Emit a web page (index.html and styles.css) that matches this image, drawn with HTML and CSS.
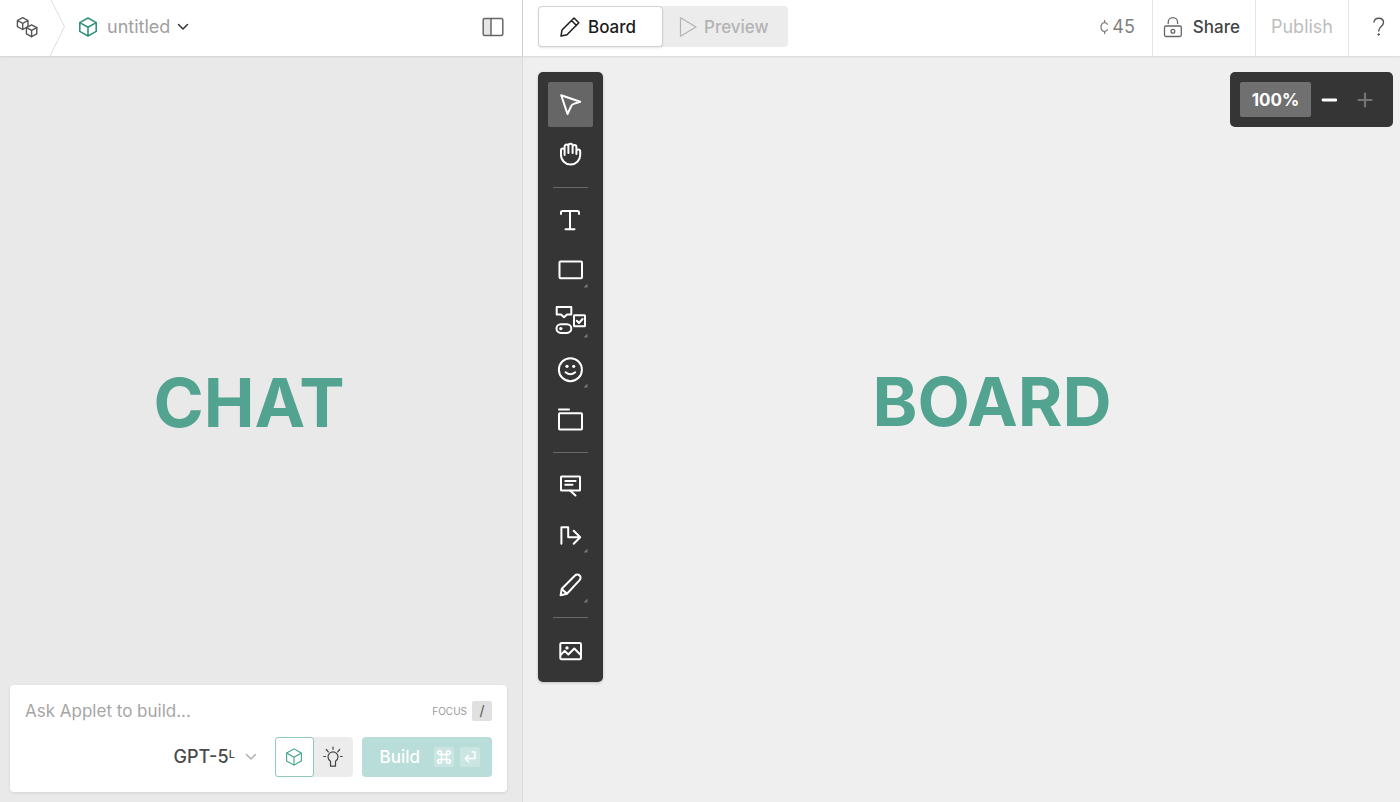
FILE: index.html
```html
<!DOCTYPE html>
<html lang="en">
<head>
<meta charset="utf-8">
<title>untitled</title>
<link rel="stylesheet" href="styles.css">
</head>
<body>
<svg class="defs" aria-hidden="true">
  <symbol id="cube" viewBox="0 0 20 20"><path d="M10 1l8.200 4.600v8.800L10 19l-8.200-4.600V5.600zM1.800 5.600L10 10.200l8.200-4.600M10 10.200V19"/></symbol>
  <symbol id="chevron" viewBox="0 0 12 12"><path d="M1.500 3.500l4.500 4.500 4.500-4.500"/></symbol>
</svg>
<div class="app">
  <section class="chat">
    <header class="bar">
      <button class="home" aria-label="All applets">
        <svg width="22" height="22" viewBox="0 0 22 22"><path d="M6.700 1.700l5.300 2.800v6.200L6.700 13.500l-5.300-2.800V4.500zM1.400 4.500l5.300 2.900L12 4.500M6.700 7.400v6.100"/><path class="front" d="M15.600 8.800l5.200 2.800v6.200l-5.200 2.900-5.200-2.900v-6.200z"/><path d="M10.400 11.600l5.200 2.800 5.200-2.800M15.600 14.400v6.300"/></svg>
      </button>
      <svg class="crumb" width="16" height="56" viewBox="0 0 16 56" aria-hidden="true"><path d="M1 0l13.500 26.500L0 56"/></svg>
      <button class="project">
        <svg class="cube-green" width="20" height="20"><use href="#cube"/></svg>
        <span>untitled</span>
        <svg class="caret" width="12" height="12"><use href="#chevron"/></svg>
      </button>
      <button class="panel-toggle" aria-label="Toggle sidebar">
        <svg width="22" height="20" viewBox="0 0 22 20"><path class="pane" d="M1.500 2H9v16H1.500z"/><rect x="1.200" y="1.600" width="19.600" height="16.800" rx="1.500"/><path d="M9 1.600v16.800"/></svg>
      </button>
    </header>
    <main class="chat-body"><h1>CHAT</h1></main>
    <form class="composer">
      <div class="prompt">
        <input type="text" aria-label="Prompt" placeholder="Ask Applet to build...">
        <span class="focus">FOCUS</span><kbd class="slash">/</kbd>
      </div>
      <div class="actions">
        <label class="model"><select aria-label="Model"><option>GPT-5ᴸ</option></select>
          <svg width="12" height="12"><use href="#chevron"/></svg></label>
        <div class="modes">
          <button type="button" class="mode active" aria-label="Build mode"><svg width="18" height="20"><use href="#cube"/></svg></button>
          <button type="button" class="mode" aria-label="Idea mode"><svg width="20" height="22" viewBox="0 0 20 22"><path d="M7.500 15.300C5.900 14 5 12.800 5 10.900a5 5 0 0 1 10 0c0 1.900-.9 3.100-2.500 4.400v4.900h-5zM10 1v2.300M3.300 3.500l2 2.300M16.700 3.500l-2 2.300M.8 10.500h1.800M17.400 10.500h1.800"/></svg></button>
        </div>
        <button type="button" class="build"><span>Build</span>
          <kbd><svg width="16" height="16" viewBox="0 0 16 16"><path d="M5.500 5.500h5v5h-5zM5.500 5.500H3.700a1.900 1.900 0 1 1 1.800-1.900zM10.500 5.500V3.600a1.900 1.900 0 1 1 1.800 1.900zM10.500 10.500h1.800a1.900 1.900 0 1 1-1.800 1.900zM5.500 10.500v1.900a1.900 1.900 0 1 1-1.800-1.900z"/></svg></kbd>
          <kbd><svg width="16" height="16" viewBox="0 0 16 16"><path d="M10 3h3v6.500H3.500M6.500 6.300L3.300 9.500l3.200 3.200"/></svg></kbd>
        </button>
      </div>
    </form>
  </section>

  <section class="board">
    <header class="bar">
      <div class="tabs">
        <button class="tab active"><svg width="22" height="22" viewBox="0 0 22 22"><path d="M2 20l1-6L15 2l4.800 4.800L8 18.800zM12.500 4.500l5 5"/></svg>Board</button>
        <button class="tab"><svg width="18" height="22" viewBox="0 0 18 22"><path d="M1.500 1.800v18.400L17 11z"/></svg>Preview</button>
      </div>
      <div class="credits"><svg width="8" height="16" viewBox="0 0 8 16"><path d="M7.300 5.200C6.600 4.200 5.700 3.700 4.600 3.700 2.500 3.700 1 5.400 1 8s1.500 4.300 3.600 4.300c1.100 0 2-.5 2.700-1.500M4.600 1.500v2.200M4.600 12.300v2.200"/></svg>45</div>
      <button class="share"><svg width="20" height="22" viewBox="0 0 20 22"><rect x="1.500" y="10" width="16.800" height="10.500" rx="1.500"/><circle cx="9.900" cy="15.300" r="1.900"/><path d="M5.200 7.500V6.400a4.700 4.700 0 0 1 9.400 0v1.100"/></svg>Share</button>
      <button class="publish">Publish</button>
      <button class="help" aria-label="Help"><svg width="12" height="20" viewBox="0 0 12 20"><path d="M1 5c.4-2.300 2.300-3.700 4.700-3.700 2.800 0 4.800 1.700 4.800 4.200 0 4-4.800 4-4.800 8.500"/><circle cx="5.700" cy="17.500" r=".8"/></svg></button>
    </header>
    <main class="canvas">
      <nav class="tools" aria-label="Tools">
        <button class="tool active" aria-label="Select"><svg viewBox="0 0 45 45"><path d="M13.200 13.200l19 6.500-6.500 2.200q-2 .6-2.700 2.600L19.500 32z"/></svg></button>
        <button class="tool" aria-label="Hand"><svg viewBox="0 0 45 45"><path d="M16.600 23v-4.800a1.800 1.800 0 0 0-3.600 0V23a9.600 9.600 0 0 0 19.200 0v-3.500a1.900 1.900 0 0 0-3.800 0V22M16.600 18.500v-4a1.900 1.900 0 0 1 3.800 0V21M20.400 15v-1.200a2.100 2.100 0 0 1 4.200 0V21M24.600 15a1.900 1.900 0 0 1 3.800 0v7"/></svg></button>
        <hr>
        <button class="tool" aria-label="Text"><svg viewBox="0 0 45 45"><path d="M13 17v-1.500q0-1.500 1.500-1.500h15q1.500 0 1.500 1.500V17M22 14v18.300M17.500 32.300h9"/></svg></button>
        <button class="tool" aria-label="Rectangle"><svg viewBox="0 0 45 45"><rect x="11.500" y="14.500" width="22.500" height="16.800" rx="1"/><path class="more" d="M39.500 36.500v4H35.500z"/></svg></button>
        <button class="tool" aria-label="Components"><svg viewBox="0 0 45 45"><path d="M8.700 10h14.600v7.500h-4.300L16 20.300l-3-2.800H8.700z"/><rect x="26" y="18.300" width="11" height="11" rx=".5"/><path d="M28.800 23.800l2.200 2.200 3.600-4"/><rect x="8.500" y="27.300" width="14.800" height="8.600" rx="4.300"/><circle class="dot" cx="12.800" cy="31.600" r="1.700"/><path class="more" d="M39.500 36.500v4H35.500z"/></svg></button>
        <button class="tool" aria-label="Emoji"><svg viewBox="0 0 45 45"><circle cx="22.400" cy="22.700" r="11.500"/><circle class="dot" cx="19" cy="19.300" r="1.600"/><circle class="dot" cx="25.700" cy="19.300" r="1.600"/><path d="M17.600 25.300q4.800 4 9.600 0"/><path class="more" d="M39.500 36.500v4H35.500z"/></svg></button>
        <button class="tool" aria-label="Frame"><svg viewBox="0 0 45 45"><path d="M11 12.500h10"/><rect x="11" y="16.300" width="23" height="16.300" rx=".8"/></svg></button>
        <hr>
        <button class="tool" aria-label="Comment"><svg viewBox="0 0 45 45"><rect x="13" y="14.500" width="19" height="14" rx=".5"/><path d="M22 28.500l5.500 5M17.300 18.900h10.300M17.300 22.800h7.200"/></svg></button>
        <button class="tool" aria-label="Connector"><svg viewBox="0 0 45 45"><path d="M13.400 31.700V15.200h6.800v10h12M25.700 18.700l6.500 6.500-6.500 6.500"/><path class="more" d="M39.500 36.500v4H35.500z"/></svg></button>
        <button class="tool" aria-label="Pencil"><svg viewBox="0 0 45 45"><path d="M12.600 33.300l1.200-6.600L27 13.500a3.200 3.200 0 0 1 4.600 4.600L19 31.700zM14 27.300l4.700 4.300"/><path class="more" d="M39.500 36.500v4H35.500z"/></svg></button>
        <hr>
        <button class="tool" aria-label="Image"><svg viewBox="0 0 45 45"><rect x="12.300" y="16" width="20.700" height="16.200" rx="1.200"/><circle class="dot" cx="19" cy="20.900" r="1.700"/><path d="M12.800 27.700l3.900-3.800 3.600 3.600 6-6 6.200 6.200"/></svg></button>
      </nav>
      <h1>BOARD</h1>
      <div class="zoom">
        <button class="level">100%</button>
        <button class="step" aria-label="Zoom out"><svg width="16" height="16" viewBox="0 0 16 16"><path d="M2 8h13"/></svg></button>
        <button class="step dim" aria-label="Zoom in"><svg width="16" height="16" viewBox="0 0 16 16"><path d="M1.500 8h13M8 1.500v13"/></svg></button>
      </div>
    </main>
  </section>
</div>
</body>
</html>
```
FILE: styles.css
```css
* { box-sizing: border-box; }
body { margin: 0; font: 18px/24px Inter, "Noto Sans", sans-serif; color: #444; }
button, input, select { font: inherit; color: inherit; border: 0; background: none; padding: 0; margin: 0; }
button { display: flex; align-items: center; cursor: pointer; }
kbd { font: inherit; }
svg { flex: none; fill: none; stroke: currentColor; stroke-width: 1.5; stroke-linecap: round; stroke-linejoin: round; }
.defs { display: none; }
h1 { margin: 0; font: 700 68px/80px Inter, sans-serif; color: #52a390; }

.app { display: flex; min-height: 100vh; }
.chat { flex: 0 0 523px; display: flex; flex-direction: column; background: #e9e9e9; border-right: 1px solid #dcdcdc; }
.board { flex: 1; min-width: 0; display: flex; flex-direction: column; background: #efefef; }
.bar { height: 56px; display: flex; align-items: center; background: #fff; box-shadow: 0 1px 2px rgba(0, 0, 0, .1); padding-bottom: 3px; }

.home { padding-left: 16px; width: 50px; color: #555; }
.home svg { stroke-width: 1.4; }
.front { fill: #fff; }
.crumb { color: #ddd; align-self: flex-start; stroke-width: 1; }
.project { gap: 9px; margin-left: 12px; color: #a0a0a0; }
.cube-green { color: #35917c; stroke-width: 1.6; }
.caret { color: #333; margin-left: -2px; }
.panel-toggle { margin-left: auto; margin-right: 18px; color: #666; }
.panel-toggle .pane { fill: #e6e6e6; stroke: none; }

.chat-body { flex: 1; display: flex; align-items: center; justify-content: center; padding: 62px 24px 0 0; }
.composer { margin: 0 15px 10px 10px; padding: 15px; background: #fff; border-radius: 4px; box-shadow: 0 1px 3px rgba(0, 0, 0, .1); }
.prompt { display: flex; align-items: center; height: 22px; }
.prompt input { flex: 1; min-width: 0; outline: 0; font-size: 17px; }
.prompt input::placeholder { color: #a6a6a6; opacity: 1; }
.focus { font-size: 10px; color: #999; margin-right: 5px; }
.slash { width: 20px; height: 20px; background: #e0e0e0; border-radius: 2px; font-size: 14px; line-height: 20px; text-align: center; color: #555; }
.actions { display: flex; justify-content: flex-end; align-items: center; margin-top: 15px; height: 40px; }
.model { display: flex; align-items: center; color: #b0b0b0; margin-right: 18px; }
.model select { appearance: none; color: #4a4a4a; font-weight: 500; margin-right: 9px; outline: 0; }
.modes { display: flex; background: #ececec; border-radius: 4px; margin-right: 9px; }
.mode { width: 39px; height: 40px; justify-content: center; color: #444; }
.mode svg { stroke-width: 1.2; }
.mode.active { background: #fff; border: 1px solid #8fcbbd; border-radius: 3px; color: #3da08b; }
.build { height: 40px; padding: 0 12px 0 18px; gap: 6px; background: #b9ddd8; color: #fff; border-radius: 4px; font-size: 17px; font-weight: 500; }
.build span { margin-right: 8px; }
.build kbd { width: 20px; height: 20px; display: grid; place-items: center; background: #cbe6e2; border-radius: 2px; }

.tabs { display: flex; margin-left: 15px; background: #ececec; border-radius: 4px; height: 41px; }
.tab { width: 125px; gap: 7px; padding-left: 16px; color: #b3b3b3; font-size: 17px; font-weight: 500; }
.tab svg { stroke-width: 1.2; }
.tab.active { padding-left: 20px; background: #fff; color: #1c1c1c; border: 1px solid #d2d2d2; border-radius: 4px; box-shadow: 0 1px 2px rgba(0, 0, 0, .1); }
.tab.active svg { stroke-width: 1.5; }
.credits { margin-left: auto; display: flex; align-items: center; gap: 4px; padding-right: 17px; color: #808080; }
.credits svg { stroke-width: 1.3; }
.share, .publish, .help { height: 56px; margin-bottom: -3px; padding: 0 15px 3px; border-left: 1px solid #e5e5e5; }
.share { gap: 10px; padding-left: 10px; font-size: 17px; font-weight: 500; }
.share svg { stroke-width: 1.3; color: #666; }
.publish { color: #bdbdbd; }
.help { width: 52px; padding-left: 24px; color: #555; }
.help svg { stroke-width: 1.4; }
.help circle { fill: currentColor; stroke-width: 1; }

.canvas { position: relative; flex: 1; display: flex; align-items: flex-start; padding: 16px 7px 16px 15px; }
.canvas h1 { flex: 1; align-self: center; text-align: center; padding: 0 12px 56px 0; }
.tools { width: 65px; padding: 10px; display: flex; flex-direction: column; gap: 5px; background: #353535; border-radius: 5px; box-shadow: 0 1px 3px rgba(0, 0, 0, .2); color: #fff; }
.tools hr { width: 35px; height: 1px; margin: 5px auto 4px; border: 0; background: #686868; }
.tool { width: 45px; height: 45px; border-radius: 2px; }
.tool svg { width: 45px; height: 45px; stroke-width: 2; }
.tool.active { background: #666; }
.tool .dot { fill: currentColor; stroke: none; }
.tool .more { fill: #777; stroke: none; }
.zoom { position: absolute; top: 16px; right: 7px; display: flex; padding: 10px; background: #353535; border-radius: 5px; color: #fff; }
.zoom button { height: 35px; justify-content: center; }
.level { width: 71px; background: #707070; border-radius: 2px; font-size: 17px; font-weight: 700; }
.step { width: 36px; }
.step svg { stroke-width: 2.8; }
.step.dim { color: #747474; }
.step.dim svg { stroke-width: 2.2; }
```
